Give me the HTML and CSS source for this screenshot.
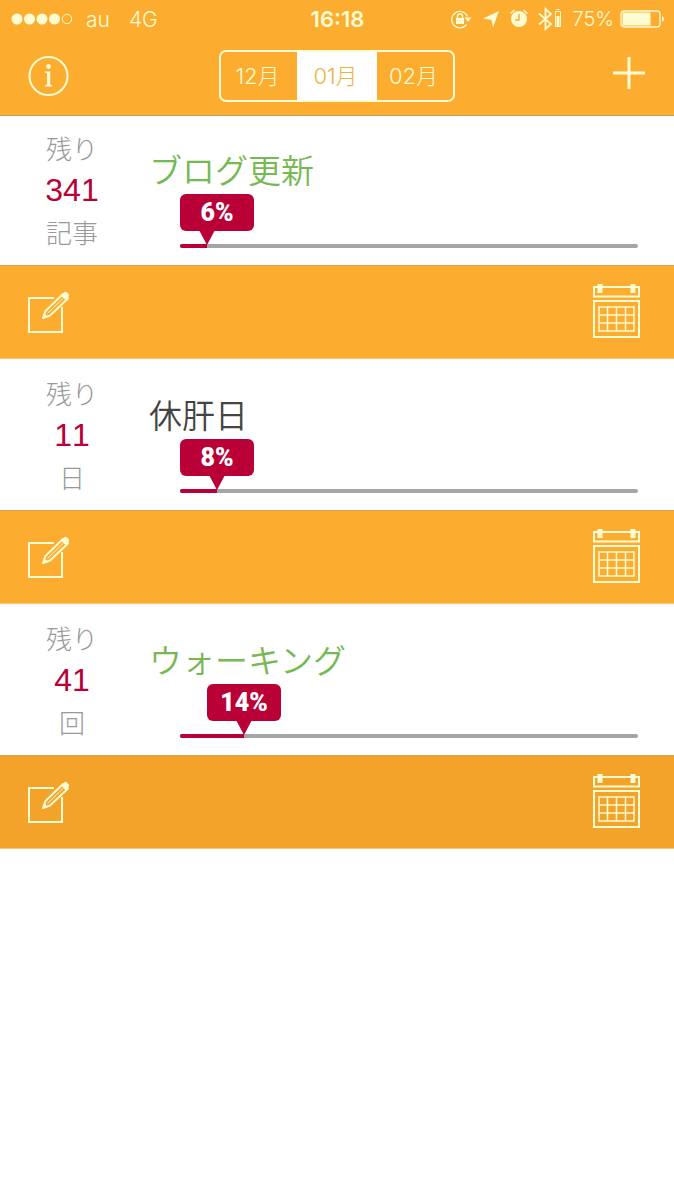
FILE: index.html
```html
<!DOCTYPE html>
<html lang="ja">
<head>
<meta charset="utf-8">
<meta name="viewport" content="width=device-width, initial-scale=1">
<title>目標</title>
<link rel="stylesheet" href="styles.css">
</head>
<body>
<svg class="sprite" aria-hidden="true">
  <symbol id="edit" viewBox="0 -1 44 44">
    <path d="M27 7H2v34h33V16" fill="none" stroke="currentColor" stroke-width="2"/>
    <path d="M16 27l2.500-7L36 3l5 4.500L23 24.500z" fill="none" stroke="currentColor" stroke-width="2" stroke-linejoin="round"/>
    <path d="M34 4.500l3-3q1.500-1.500 3 0l1.500 1.500q1.500 1.500 0 3L38.500 9zM15 28l2-6 4 4z" fill="currentColor"/>
    <path d="M20.500 22.500L36.500 7" fill="none" stroke="currentColor" stroke-width="1"/>
  </symbol>
  <symbol id="calendar" viewBox="0 1 48 56">
    <g fill="none" stroke="currentColor">
      <path d="M2 4h45v9.500H2zM2 18h45v36H2z" stroke-width="2"/>
      <path d="M7 24h35v24H7zM15.500 24v24M24.500 24v24M33.500 24v24M7 32h35M7 40h35" stroke-width="1.500"/>
    </g>
    <path d="M5.500 1h5v9h-5zM38.500 1h5v9h-5z" fill="currentColor"/>
  </symbol>
</svg>

<header class="header">
  <div class="status">
    <div class="status-left">
      <svg width="62" height="12" viewBox="0 0 62 12" fill="currentColor" aria-hidden="true"><circle cx="6" cy="6" r="5.500"/><circle cx="18.500" cy="6" r="5.500"/><circle cx="31" cy="6" r="5.500"/><circle cx="43.500" cy="6" r="5.500"/><circle cx="56" cy="6" r="4.700" fill="none" stroke="currentColor"/></svg>
      <span class="carrier">au</span>
      <span>4G</span>
    </div>
    <time class="clock">16:18</time>
    <div class="status-right">
      <svg width="22" height="20" viewBox="0 0 22 20" aria-hidden="true"><path d="M16.500 15.500A8.200 8.200 0 1 1 17.500 7.500" fill="none" stroke="currentColor" stroke-width="1.300"/><path d="M14.500 8.500h7L18 13zM6 9h8v6H6z" fill="currentColor"/><path d="M7.500 9V7.500a2.500 2.500 0 0 1 5 0V9" fill="none" stroke="currentColor" stroke-width="1.500"/></svg>
      <svg class="location" width="16" height="18" viewBox="0 0 16 18" aria-hidden="true"><path d="M16 1L10 17.500 8.500 10 0 8.500z" fill="currentColor"/></svg>
      <svg width="18" height="20" viewBox="0 0 18 20" aria-hidden="true"><circle cx="9" cy="10" r="8" fill="currentColor"/><path d="M.5 4.500l4-3.500M17.500 4.500l-4-3.500" stroke="currentColor" stroke-width="1.500"/><path d="M9 5v6H5" class="hands" fill="none" stroke-width="1.500"/></svg>
      <svg class="bluetooth" width="24" height="24" viewBox="0 0 24 24" aria-hidden="true"><path d="M1 6.500L13 17l-5.500 5V2L13 7 1 17.500" fill="none" stroke="currentColor" stroke-width="1.800"/><path d="M17.500 4.500h5v15h-5zM18.500 2.500h3" fill="none" stroke="currentColor"/><path d="M18.500 9h3v10h-3z" fill="currentColor"/></svg>
      <span class="percent">75%</span>
      <svg class="battery" width="44" height="18" viewBox="0 0 44 18" aria-hidden="true"><rect x="1" y="1" width="39" height="16" rx="3" fill="none" stroke="currentColor" stroke-width="1.300"/><path d="M2.500 2.500h28v13h-28zM42 6q2 1 2 3t-2 3z" fill="currentColor"/></svg>
    </div>
  </div>
  <nav class="nav">
    <button class="icon-button" type="button" aria-label="情報">
      <svg width="42" height="42" viewBox="0 0 42 42" aria-hidden="true"><circle cx="20.500" cy="21" r="19" fill="none" stroke="currentColor" stroke-width="2"/><circle cx="20.500" cy="11.500" r="2.400" fill="currentColor"/><path d="M17 16.500h5.200v13l2 1v1H17v-1l2-1V18.500l-2-1z" fill="currentColor"/></svg>
    </button>
    <div class="months" role="group" aria-label="月">
      <button class="month" type="button" aria-pressed="false">12月</button>
      <button class="month" type="button" aria-pressed="true">01月</button>
      <button class="month" type="button" aria-pressed="false">02月</button>
    </div>
    <button class="icon-button add" type="button" aria-label="追加">
      <svg width="32" height="37" viewBox="0 0 32 37" aria-hidden="true"><path d="M16 0v32M0 16h32" stroke="currentColor" stroke-width="3"/></svg>
    </button>
  </nav>
</header>

<main>
  <article class="goal">
    <div class="summary">
      <p class="remaining"><span>残り</span><strong>341</strong><span>記事</span></p>
      <div class="detail">
        <h2 class="title title-active">ブログ更新</h2>
        <div class="track" role="progressbar" aria-label="ブログ更新" aria-valuenow="6" style="--value: 6%"><span class="balloon">6%</span><i class="fill"></i></div>
      </div>
    </div>
    <div class="actions">
      <button class="icon-button" type="button" aria-label="編集"><svg width="44" height="44"><use href="#edit"/></svg></button>
      <button class="icon-button" type="button" aria-label="カレンダー"><svg width="48" height="56"><use href="#calendar"/></svg></button>
    </div>
  </article>
  <article class="goal">
    <div class="summary">
      <p class="remaining"><span>残り</span><strong>11</strong><span>日</span></p>
      <div class="detail">
        <h2 class="title">休肝日</h2>
        <div class="track" role="progressbar" aria-label="休肝日" aria-valuenow="8" style="--value: 8%"><span class="balloon">8%</span><i class="fill"></i></div>
      </div>
    </div>
    <div class="actions">
      <button class="icon-button" type="button" aria-label="編集"><svg width="44" height="44"><use href="#edit"/></svg></button>
      <button class="icon-button" type="button" aria-label="カレンダー"><svg width="48" height="56"><use href="#calendar"/></svg></button>
    </div>
  </article>
  <article class="goal">
    <div class="summary">
      <p class="remaining"><span>残り</span><strong>41</strong><span>回</span></p>
      <div class="detail">
        <h2 class="title title-active">ウォーキング</h2>
        <div class="track" role="progressbar" aria-label="ウォーキング" aria-valuenow="14" style="--value: 14%"><span class="balloon">14%</span><i class="fill"></i></div>
      </div>
    </div>
    <div class="actions actions-dark">
      <button class="icon-button" type="button" aria-label="編集"><svg width="44" height="44"><use href="#edit"/></svg></button>
      <button class="icon-button" type="button" aria-label="カレンダー"><svg width="48" height="56"><use href="#calendar"/></svg></button>
    </div>
  </article>
</main>
</body>
</html>
```

FILE: styles.css
```css
:root {
  --orange: #fcad30;
  --cream: #fffbd2;
  --crimson: #b90037;
}

* { box-sizing: border-box; }

body {
  margin: 0;
  background: #fff;
  font-family: Inter, "Noto Sans CJK JP", sans-serif;
}

.sprite { display: none; }

svg { display: block; }

.header {
  position: relative;
  z-index: 1;
  margin-bottom: -2px;
  background: var(--orange);
  border-bottom: 1px solid #c9a060;
  color: var(--cream);
}

.status {
  display: grid;
  grid-template-columns: 1fr auto 1fr;
  align-items: center;
  height: 38px;
  padding: 0 10px 0 11px;
  font-size: 21px;
  font-weight: 300;
}

.status-left,
.status-right {
  display: flex;
  align-items: center;
}

.status-right { justify-content: flex-end; }

.carrier { margin: 0 19px 0 13px; }

.clock {
  font-size: 22px;
  font-weight: 600;
}

.location { margin: 0 11px; }

.bluetooth { margin: 0 10px; }

.percent { font-size: 20px; }

.battery { margin-left: 6px; }

.hands { stroke: var(--orange); }

.nav {
  display: grid;
  grid-template-columns: 1fr auto 1fr;
  align-items: center;
  height: 77px;
  padding: 0 29px 2px 28px;
}

.icon-button {
  display: flex;
  padding: 0;
  border: 0;
  background: none;
  color: inherit;
}

.add { justify-self: end; }

.months {
  display: grid;
  grid-template-columns: 19fr 20fr 19fr;
  width: 236px;
  height: 52px;
  border: 2px solid var(--cream);
  border-radius: 7px;
  overflow: hidden;
}

.month {
  padding: 0 2px 4px 0;
  border: 0;
  background: none;
  color: var(--cream);
  font: inherit;
  font-size: 22px;
  font-weight: 300;
}

.month[aria-pressed="true"] {
  background: #fff;
  color: #ecb33f;
}

.summary {
  display: grid;
  grid-template-columns: 144px 1fr;
  height: 151px;
  padding: 13px 36px 0 0;
}

.remaining {
  display: flex;
  flex-direction: column;
  align-items: center;
  margin: 0;
  color: #999;
  font-family: "Noto Sans CJK JP", sans-serif;
  font-size: 26px;
  font-weight: 300;
  line-height: 42px;
}

.remaining strong {
  color: var(--crimson);
  font-family: "Liberation Sans", sans-serif;
  font-size: 32px;
  font-weight: 400;
  font-kerning: none;
}

.title {
  margin: 21px 0 54px 5px;
  color: #444;
  font-family: "Noto Sans CJK JP", sans-serif;
  font-size: 33px;
  font-weight: 350;
  line-height: 42px;
}

.title-active { color: #76b852; }

.track {
  position: relative;
  height: 4px;
  margin-left: 36px;
  border-radius: 2px;
  background: #a5a5a5;
}

.fill {
  display: block;
  width: var(--value);
  height: 4px;
  border-radius: 2px 0 0 2px;
  background: var(--crimson);
}

.balloon {
  position: absolute;
  bottom: 17px;
  left: clamp(0px, calc(var(--value) - 37px), calc(100% - 74px));
  width: 74px;
  border-radius: 6px;
  background: var(--crimson);
  color: #fff;
  font-family: "Liberation Sans Narrow", Roboto, sans-serif;
  font-size: 25px;
  font-weight: 900;
  line-height: 37px;
  text-align: center;
}

.track::before {
  content: "";
  position: absolute;
  bottom: 3px;
  left: calc(var(--value) - 8px);
  border: 8px solid transparent;
  border-top: 15px solid var(--crimson);
  border-bottom: 0;
}

.actions {
  display: flex;
  align-items: center;
  justify-content: space-between;
  height: 94px;
  padding: 0 34px 0 27px;
  border-top: 1px solid #d3a45a;
  border-bottom: 1px solid #fbc675;
  background: var(--orange);
  color: var(--cream);
}

.actions-dark { background: #f3a329; }
```
